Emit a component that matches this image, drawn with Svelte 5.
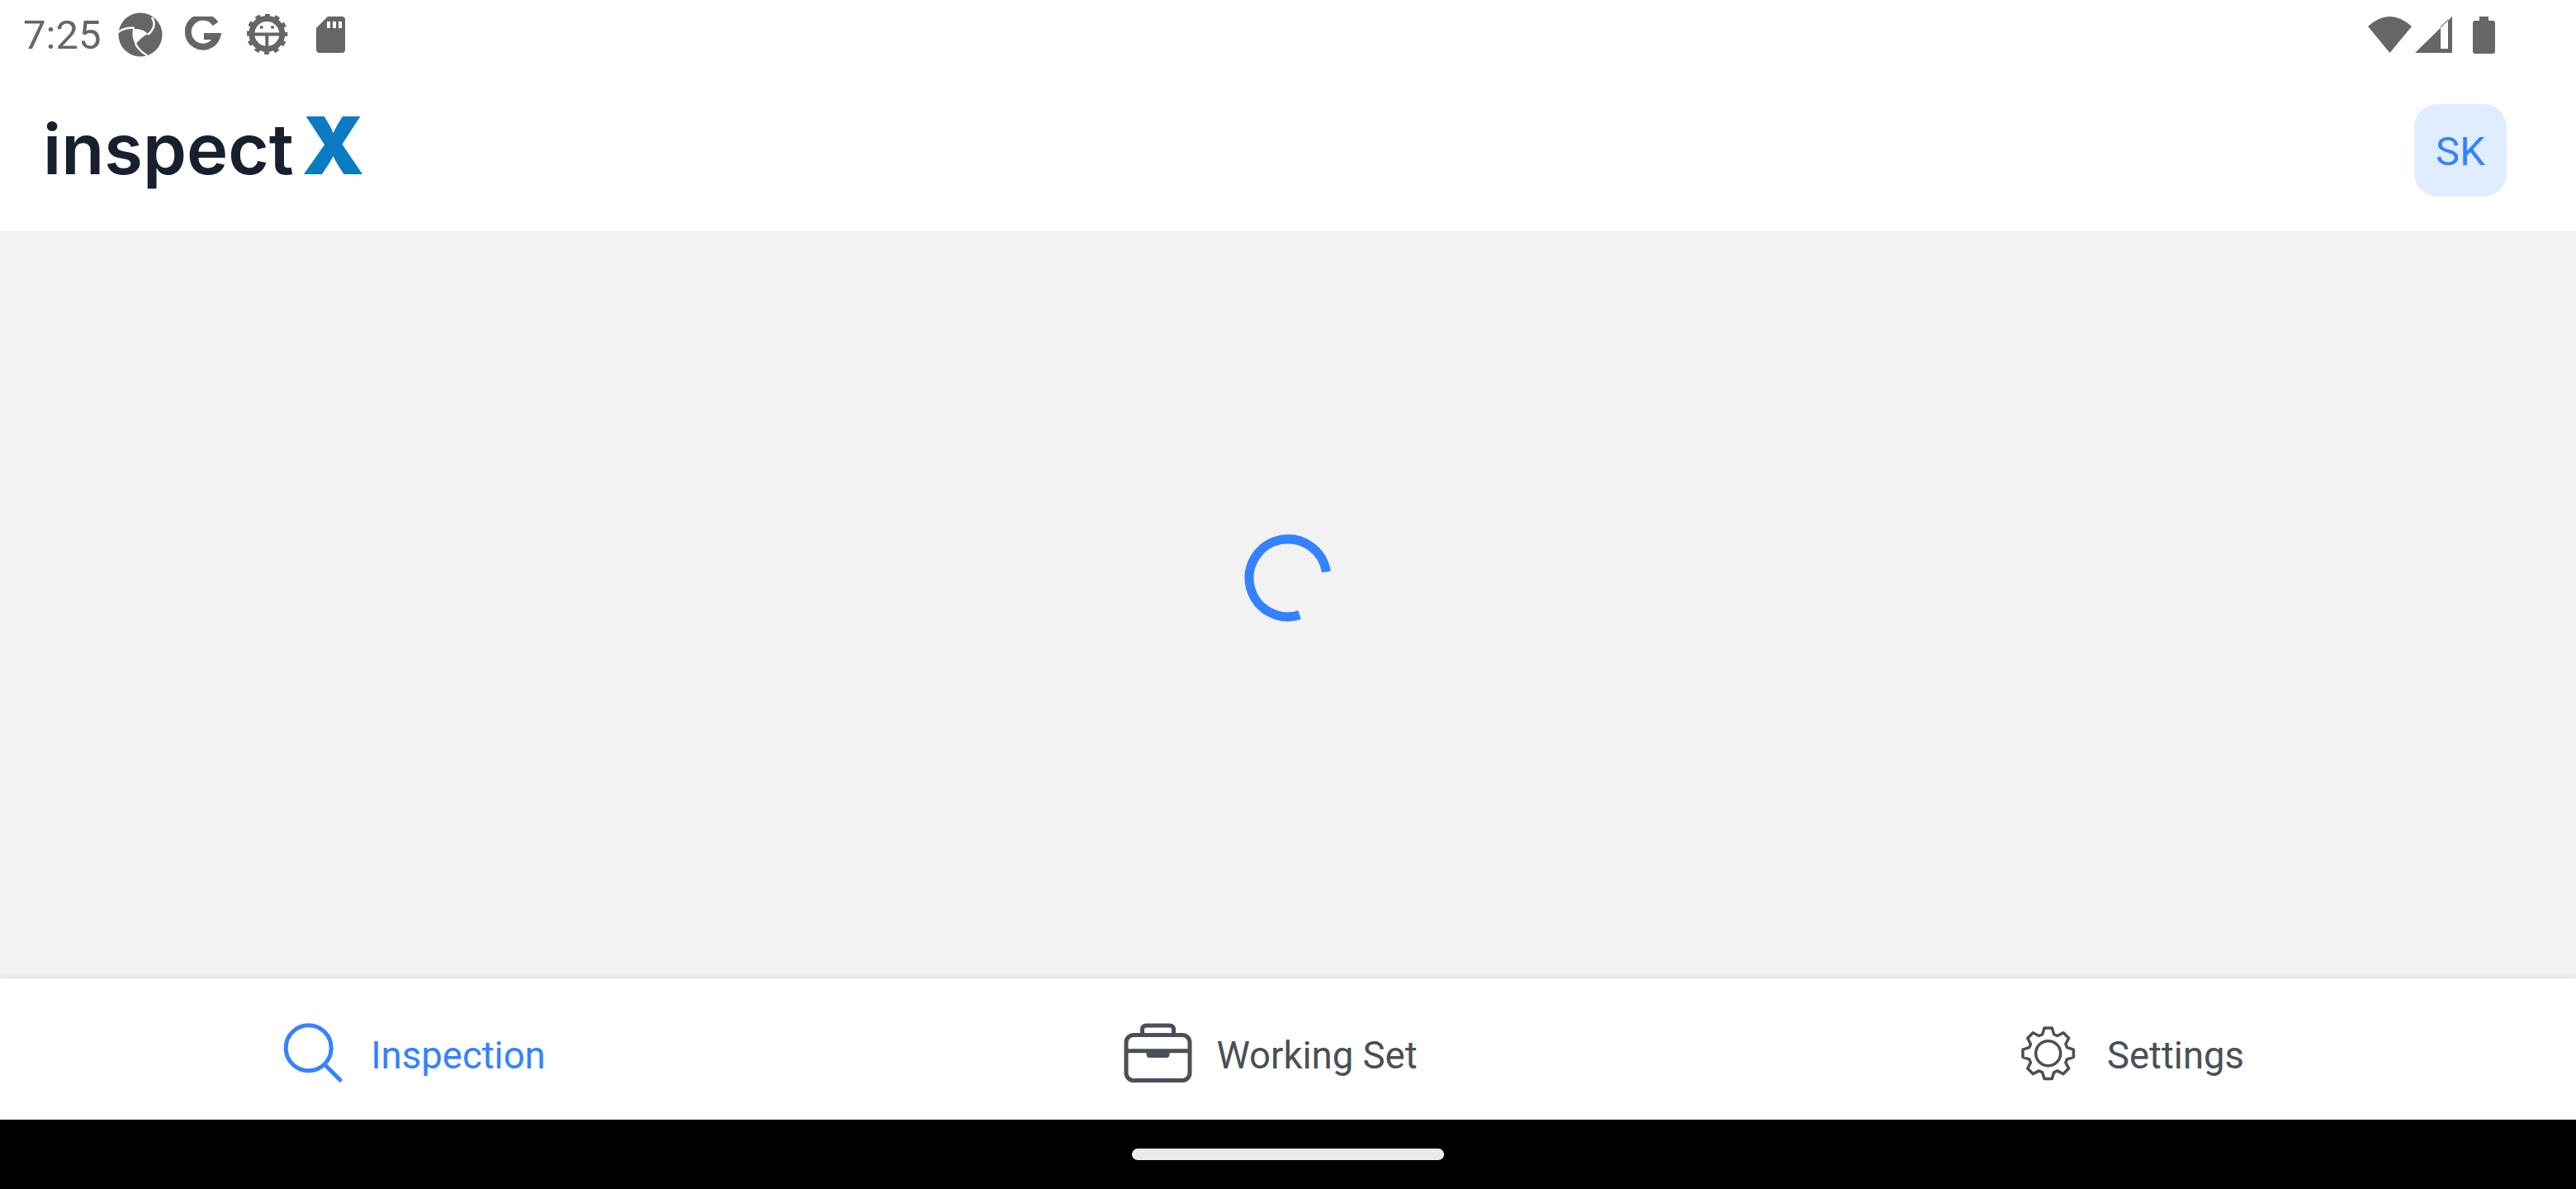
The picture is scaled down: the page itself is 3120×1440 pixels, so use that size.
<script>
	// 8-tooth gear outline, in a 96x96 box
	function gearPath(cx, cy) {
		const root = 24;
		const tip = 31;
		const pts = [];
		for (let i = 0; i < 8; i++) {
			const a = (i * Math.PI) / 4 - Math.PI / 2;
			for (const [r, d] of [
				[root, -0.3],
				[tip, -0.15],
				[tip, 0.15],
				[root, 0.3]
			]) {
				pts.push(`${(cx + r * Math.cos(a + d)).toFixed(1)} ${(cy + r * Math.sin(a + d)).toFixed(1)}`);
			}
		}
		return 'M' + pts.join('L') + 'Z';
	}

	const tabs = [
		{ id: 'search', label: 'Inspection', active: true },
		{ id: 'case', label: 'Working Set', active: false },
		{ id: 'gear', label: 'Settings', active: false }
	];
</script>

<div class="screen">
	<div class="statusbar">
		<div class="status-left">
			<span class="time">7:25</span>
			<svg class="notif aperture" viewBox="0 0 54 54">
				<circle cx="27" cy="27" r="26.500" fill="#666" />
				<path d="M0 24Q8 18 20 19M41 6Q48 17 36 27M35 52Q26 47 21 38" fill="none" stroke="#fff" stroke-width="2.500" />
				<path d="M18 20Q30 19 36 26Q28 30 21 39Q16 30 18 20Z" fill="#fff" />
			</svg>
			<svg class="notif google" viewBox="0 0 44 44">
				<path d="M37 9A18 18 0 1 0 39 24H23" fill="none" stroke="#666" stroke-width="8" />
			</svg>
			<svg class="notif debug" viewBox="0 0 50 50">
				<circle cx="24.300" cy="24" r="18.500" fill="none" stroke="#666" stroke-width="7" />
				<circle cx="24.300" cy="24" r="22.500" fill="none" stroke="#666" stroke-width="5" stroke-dasharray="5.890 5.890" stroke-dashoffset="2.945" />
				<path d="M8 24.500H41M24.300 24.500V41" stroke="#666" stroke-width="4" />
				<circle cx="17.700" cy="16" r="2" fill="#666" />
				<circle cx="31" cy="16" r="2" fill="#666" />
			</svg>
			<svg class="notif sd" viewBox="0 0 35 44">
				<path d="M14 0H31Q35 0 35 4V40Q35 44 31 44H4Q0 44 0 40V14Z" fill="#666" />
				<path d="M13 6h4v8h-4zM20 6h4v8h-4zM27 6h4v8h-4z" fill="#fff" />
			</svg>
		</div>
		<div class="status-right">
			<svg class="wifi" viewBox="0 0 53 44">
				<path d="M0 12Q26.500 -12 53 12L26.500 44Z" fill="#666" />
			</svg>
			<svg class="signal" viewBox="0 0 45 44">
				<path fill-rule="evenodd" d="M0 44L45 0V44ZM31 12V39H40V3.500Z" fill="#666" />
			</svg>
			<svg class="battery" viewBox="0 0 27 45">
				<path d="M8 0H19V5H24Q27 5 27 8V42Q27 45 24 45H3Q0 45 0 42V8Q0 5 3 5H8Z" fill="#666" />
			</svg>
		</div>
	</div>

	<header class="topbar">
		<div class="logo"><span class="logo-word">inspect</span><span class="logo-x">X</span></div>
		<button class="avatar">SK</button>
	</header>

	<main class="content">
		<svg class="spinner" viewBox="0 0 106 106">
			<path d="M67.100 97.800A47 47 0 1 1 99.400 45.600" fill="none" stroke="#3482ff" stroke-width="11" />
		</svg>
	</main>

	<nav class="tabbar">
		{#each tabs as tab (tab.id)}
			<div class="tab" class:active={tab.active}>
				<svg class="tab-icon" viewBox="0 0 96 96">
					{#if tab.id === 'search'}
						<circle cx="44.700" cy="42.300" r="27.500" fill="none" stroke="currentColor" stroke-width="5" />
						<path d="M66 64L83 81" fill="none" stroke="currentColor" stroke-width="5" stroke-linecap="round" />
					{:else if tab.id === 'case'}
						<rect x="11" y="26.500" width="77" height="55" rx="9" fill="none" stroke="currentColor" stroke-width="5" />
						<path d="M30.500 26V20Q30.500 15 35.500 15H63.500Q68.500 15 68.500 20V26" fill="none" stroke="currentColor" stroke-width="5" />
						<path d="M11 45.700H88" fill="none" stroke="currentColor" stroke-width="5" />
						<path d="M35.500 46H63.500V50Q63.500 54 59.500 54H39.500Q35.500 54 35.500 50Z" fill="currentColor" />
					{:else}
						<path d={gearPath(48.700, 48.700)} fill="none" stroke="currentColor" stroke-width="3.500" stroke-linejoin="round" />
						<circle cx="48.700" cy="48.700" r="15" fill="none" stroke="currentColor" stroke-width="3.500" />
					{/if}
				</svg>
				<span class="tab-label">{tab.label}</span>
			</div>
		{/each}
	</nav>

	<div class="gesture">
		<div class="pill"></div>
	</div>
</div>

<style>
	:global(body) {
		margin: 0;
		background: #fff;
	}

	.screen {
		display: flex;
		flex-direction: column;
		width: 3120px;
		height: 1440px;
		overflow: hidden;
		font-family: Roboto, sans-serif;
	}

	.statusbar {
		display: flex;
		justify-content: space-between;
		align-items: center;
		height: 84px;
		flex-shrink: 0;
		padding: 0 98px 0 28px;
		box-sizing: border-box;
		color: #666;
	}

	.status-left,
	.status-right {
		display: flex;
		align-items: center;
	}

	.time {
		font-size: 49px;
		font-weight: 400;
		width: 115px;
	}

	.notif {
		display: block;
		flex-shrink: 0;
	}

	.aperture {
		width: 54px;
		height: 54px;
		margin-right: 27px;
	}

	.google {
		width: 44px;
		height: 44px;
		margin-right: 31px;
	}

	.debug {
		width: 50px;
		height: 50px;
		margin-right: 34px;
	}

	.sd {
		width: 35px;
		height: 44px;
	}

	.wifi {
		width: 53px;
		height: 44px;
		margin-right: 4px;
	}

	.signal {
		width: 45px;
		height: 44px;
		margin-right: 25px;
	}

	.battery {
		width: 27px;
		height: 45px;
	}

	.topbar {
		display: flex;
		justify-content: space-between;
		align-items: center;
		height: 196px;
		flex-shrink: 0;
		padding: 0 84px 0 52px;
		box-sizing: border-box;
	}

	.logo {
		display: flex;
		align-items: baseline;
		padding-bottom: 12px;
		font-family: Inter, sans-serif;
		filter: blur(0.7px);
	}

	.logo-word {
		font-size: 85px;
		font-weight: 600;
		color: #16202e;
	}

	.logo-x {
		font-size: 96px;
		font-weight: 900;
		color: #0a7cc4;
		margin-left: 10px;
	}

	.avatar {
		width: 112px;
		height: 112px;
		border: 0;
		padding: 3px 0 0;
		border-radius: 28px;
		background: #e0ecff;
		color: #3482ff;
		font-family: Roboto, sans-serif;
		font-size: 49px;
		font-weight: 400;
	}

	.content {
		flex: 1;
		display: flex;
		align-items: center;
		justify-content: center;
		padding-bottom: 66px;
		background: #f2f2f2;
	}

	.spinner {
		width: 106px;
		height: 106px;
	}

	.tabbar {
		display: flex;
		height: 171px;
		flex-shrink: 0;
		background: #fff;
		box-shadow: 0 -1px 5px rgba(0, 0, 0, 0.1);
		position: relative;
	}

	.tab {
		flex: 1;
		display: flex;
		align-items: center;
		justify-content: center;
		gap: 24px;
		padding-right: 50px;
		padding-top: 9px;
		color: #4b4f57;
	}

	.tab.active {
		color: #3482ff;
	}

	.tab-icon {
		width: 96px;
		height: 96px;
		flex-shrink: 0;
	}

	.tab-label {
		font-size: 45.500px;
		padding-top: 7px;
	}

	.gesture {
		display: flex;
		justify-content: center;
		height: 84px;
		flex-shrink: 0;
		padding-top: 35px;
		box-sizing: border-box;
		background: #000;
	}

	.pill {
		width: 378px;
		height: 14px;
		border-radius: 7px;
		background: #ebebeb;
	}
</style>
